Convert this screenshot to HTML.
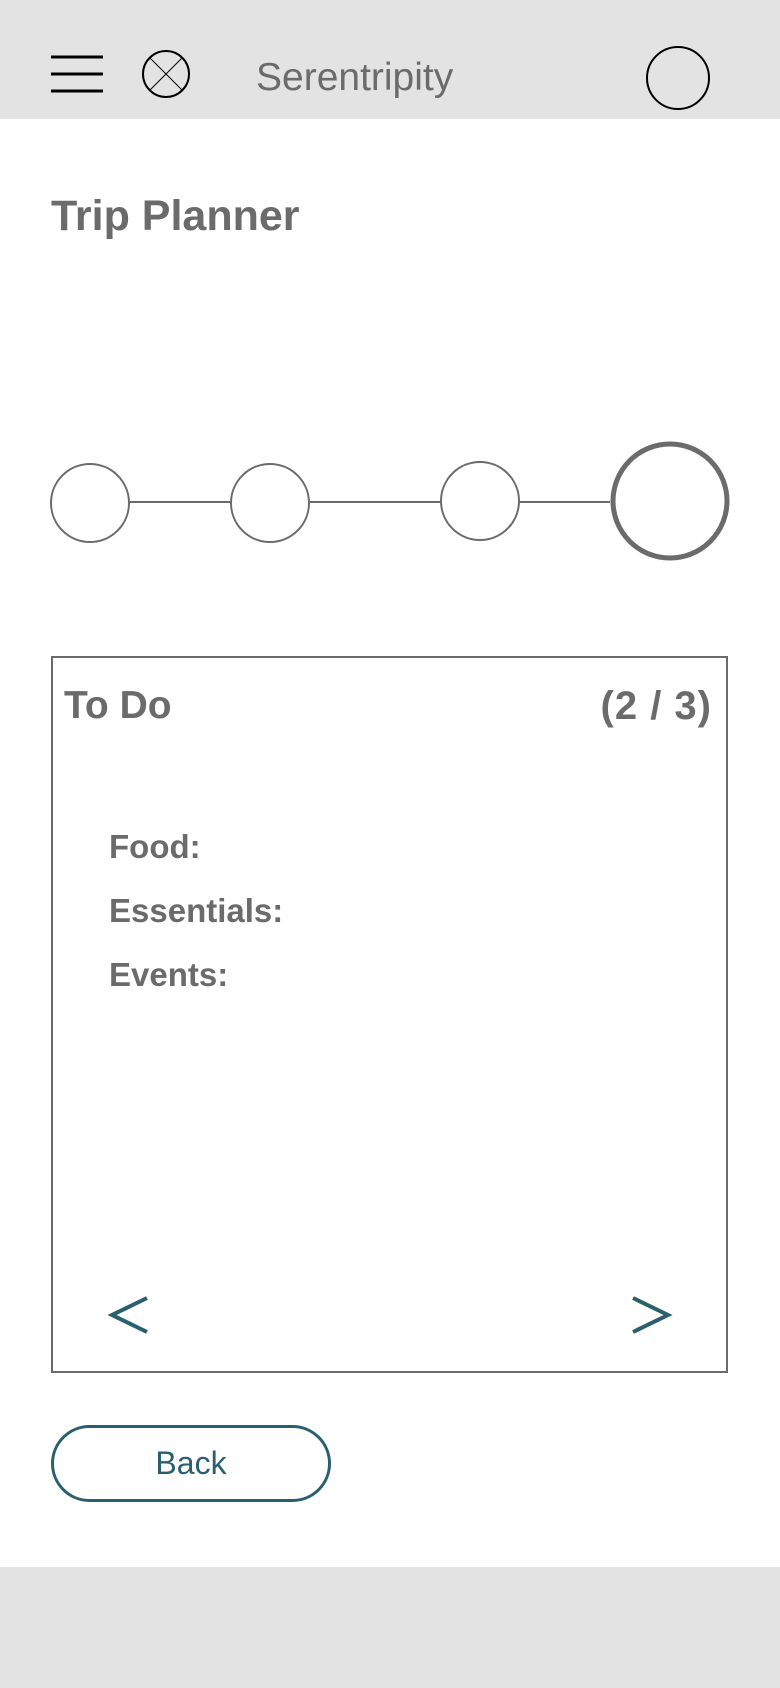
<!DOCTYPE html>
<html><head><meta charset="utf-8"><style>
*{margin:0;padding:0;box-sizing:border-box}
body{width:780px;height:1688px;position:relative;background:#fff;font-family:"Liberation Sans",sans-serif;overflow:hidden}
.hdr{position:absolute;left:0;top:0;width:780px;height:119px;background:#e3e3e3}
.ftr{position:absolute;left:0;top:1567px;width:780px;height:121px;background:#e3e3e3}
.t{position:absolute;color:#6b6b6b;white-space:nowrap;line-height:1}
.b{font-weight:bold}
.box{position:absolute;left:51px;top:656px;width:677px;height:717px;border:2px solid #6b6b6b}
.btn{position:absolute;left:51px;top:1425px;width:280px;height:77px;border:3px solid #2a5f6e;border-radius:39px;color:#2a5f6e;font-size:32px;text-align:center;line-height:71px}
</style></head><body>
<div class="hdr"></div>
<svg style="position:absolute;left:0;top:0" width="780" height="600">
<g stroke="#000" stroke-width="3"><line x1="51" y1="57" x2="103" y2="57"/><line x1="51" y1="74" x2="103" y2="74"/><line x1="51" y1="91" x2="103" y2="91"/></g>
<circle cx="166" cy="74" r="23" fill="none" stroke="#000" stroke-width="2"/>
<g stroke="#000" stroke-width="1"><line x1="150" y1="58" x2="182" y2="90"/><line x1="182" y1="58" x2="150" y2="90"/></g>
<circle cx="678" cy="78" r="31" fill="none" stroke="#000" stroke-width="2"/>
<line x1="129" y1="502" x2="610" y2="502" stroke="#6b6b6b" stroke-width="2"/>
<g fill="#fff" stroke="#6b6b6b" stroke-width="2">
<circle cx="90" cy="503" r="39"/><circle cx="270" cy="503" r="39"/><circle cx="480" cy="501" r="39"/></g>
<circle cx="670" cy="501" r="57" fill="#fff" stroke="#6b6b6b" stroke-width="5"/>
</svg>
<div class="t" style="left:256px;top:58px;font-size:39px">Serentripity</div>
<div class="t b" style="left:51px;top:195px;font-size:43px">Trip Planner</div>
<div class="box"></div>
<div class="t b" style="left:64px;top:686px;font-size:39px">To Do</div>
<div class="t b" style="right:68px;top:686px;font-size:40px;letter-spacing:1px">(2 / 3)</div>
<div class="t b" style="left:109px;top:830px;font-size:33px">Food:</div>
<div class="t b" style="left:109px;top:894px;font-size:33px">Essentials:</div>
<div class="t b" style="left:109px;top:958px;font-size:33px">Events:</div>
<svg style="position:absolute;left:0;top:1280px" width="780" height="80">
<g fill="none" stroke="#2a5f6e" stroke-width="4"><polyline points="147,18 112,35 147,52"/><polyline points="633,18 668,35 633,52"/></g>
</svg>
<div class="btn">Back</div>
<div class="ftr"></div>
</body></html>
